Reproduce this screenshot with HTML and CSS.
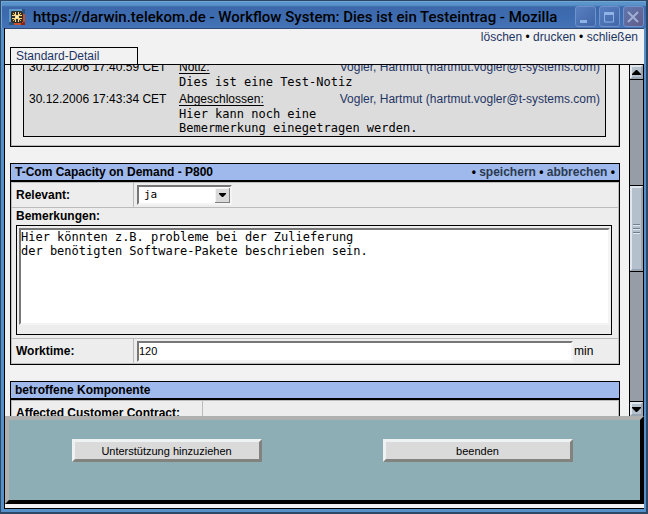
FILE: index.html
```html
<!DOCTYPE html>
<html lang="de">
<head>
<meta charset="utf-8">
<title>Workflow System</title>
<link rel="stylesheet" href="styles.css">
</head>
<body>
<div class="window">
  <header class="titlebar">
    <svg class="app-icon" width="16" height="16" viewBox="0 0 16 16" shape-rendering="crispEdges" aria-hidden="true">
      <rect width="16" height="16" fill="#2c5480"/>
      <path d="M0 0h13v2H2v11H0z" fill="#5b9ac8"/>
      <path d="M16 5v11H5v-3h8V5z" fill="#c8502c"/>
      <path d="M14 13h2v3h-4v-2h2z" fill="#8c2414"/>
      <path d="M3 2h10v1h1v10h-1v1H3v-1H2V3h1z" fill="#34302c"/>
      <path d="M6 3h1v10H6zM9 3h1v10H9zM3 6h10v1H3zM3 9h10v1H3z" fill="#fbd98a"/>
      <path d="M4 4h1v1H4zM11 4h1v1h-1zM4 11h1v1H4zM11 11h1v1h-1zM5 5h1v1H5zM10 5h1v1h-1zM5 10h1v1H5zM10 10h1v1h-1z" fill="#f0b850"/>
      <path d="M7 7h2v2H7z" fill="#fff4b8"/>
    </svg>
    <h1 class="title">https://darwin.telekom.de - Workflow System: Dies ist ein Testeintrag - Mozilla</h1>
    <div class="window-buttons">
      <button type="button" class="wbtn" aria-label="Minimieren"><svg width="18" height="18" viewBox="0 0 18 18"><path d="M4 13.5h7" stroke="#8fb3e6" stroke-width="3"/></svg></button>
      <button type="button" class="wbtn" aria-label="Maximieren"><svg width="18" height="18" viewBox="0 0 18 18"><path d="M4.5 5v9h9V5" fill="none" stroke="#8fb3e6"/><path d="M4 5.5h10" stroke="#8fb3e6" stroke-width="3"/></svg></button>
      <button type="button" class="wbtn close" aria-label="Schließen"><svg width="18" height="18" viewBox="0 0 18 18"><path d="M4 4l10 10M14 4L4 14" stroke="#9fb0d4" stroke-width="2"/></svg></button>
    </div>
  </header>

  <div class="client">
    <div class="head">
      <nav class="links"><a href="#">löschen</a> • <a href="#">drucken</a> • <a href="#">schließen</a></nav>
      <a class="tab" href="#">Standard-Detail</a>
    </div>

    <div class="viewport">
      <main class="content">
        <section class="card log-card">
          <div class="log">
            <div class="entry">
              <time>30.12.2006 17:40:59 CET</time>
              <div class="entry-head"><u>Notiz:</u><a href="#">Vogler, Hartmut (hartmut.vogler@t-systems.com)</a></div>
              <p class="note">Dies ist eine Test-Notiz</p>
            </div>
            <div class="entry">
              <time>30.12.2006 17:43:34 CET</time>
              <div class="entry-head"><u>Abgeschlossen:</u><a href="#">Vogler, Hartmut (hartmut.vogler@t-systems.com)</a></div>
              <p class="note">Hier kann noch eine<br>Bemermerkung einegetragen werden.</p>
            </div>
          </div>
        </section>

        <section class="card">
          <div class="card-head">
            <h2>T-Com Capacity on Demand - P800</h2>
            <span>• <a href="#">speichern</a> • <a href="#">abbrechen</a> •</span>
          </div>
          <div class="card-body">
            <div class="row">
              <label for="relevant">Relevant:</label>
              <div class="field">
                <span class="select">
                  <select id="relevant"><option>ja</option><option>nein</option></select>
                  <svg class="arrow" width="15" height="15" viewBox="0 0 15 15" aria-hidden="true"><path d="M0 0h15v15H0z" fill="#808080"/><path d="M0 0h14v14H0z" fill="#f4f4f4"/><path d="M1 1h13v13H1z" fill="#dadada"/><path d="M4 5h7v1l-3 3H7L4 6z" fill="#000"/></svg>
                </span>
              </div>
            </div>
            <div class="remarks">
              <label for="remarks">Bemerkungen:</label>
              <div class="area">
                <textarea id="remarks" spellcheck="false">Hier könnten z.B. probleme bei der Zulieferung
der benötigten Software-Pakete beschrieben sein.</textarea>
              </div>
            </div>
            <div class="row">
              <label for="worktime">Worktime:</label>
              <div class="field"><input id="worktime" type="text" value="120"><span>min</span></div>
            </div>
          </div>
        </section>

        <section class="card">
          <div class="card-head"><h2>betroffene Komponente</h2></div>
          <div class="card-body">
            <div class="row wide"><span class="name">Affected Customer Contract:</span><div class="field"></div></div>
          </div>
        </section>
      </main>

      <div class="scrollbar" aria-hidden="true">
        <div class="sb-btn"><svg width="9" height="5" viewBox="0 0 9 5"><path d="M4 0h1l4 4v1H0V4z"/></svg></div>
        <div class="sb-before"></div>
        <div class="sb-thumb"><i></i><i></i><i></i></div>
        <div class="sb-after"></div>
        <div class="sb-btn down"><svg width="9" height="5" viewBox="0 0 9 5"><path d="M0 0h9v1L5 5H4L0 1z"/></svg></div>
      </div>
    </div>

    <footer class="actions">
      <button type="button" class="action">Unterstützung hinzuziehen</button>
      <button type="button" class="action">beenden</button>
    </footer>
  </div>
</div>
</body>
</html>
```
FILE: styles.css
```css
* { box-sizing: border-box; }

body {
  margin: 0;
  font: 12px/16px "Liberation Sans", Arial, sans-serif;
  color: #000;
}

h1, h2, p { margin: 0; }
a { color: #1f3564; text-decoration: none; }
svg { display: block; }

.window {
  display: flex;
  flex-direction: column;
  height: 100vh;
  padding: 1px 2px 2px 1px;
  background: #2c4866;
}

/* Title bar */
.titlebar {
  display: flex;
  align-items: center;
  gap: 8px;
  height: 27px;
  padding: 3px 2px 0 7px;
  border-left: 1px solid #6fa6d8;
  border-top: 1px solid #6fa6d8;
  background: linear-gradient(#5b93cb 0 3px, #3c68ab 5px, #3e6cb0 60%, #4573b6);
}
.app-icon { flex: none; }
.title {
  flex: 1;
  min-width: 0;
  white-space: nowrap;
  font: 500 15px/22px Roboto, sans-serif;
}
.window-buttons { display: flex; gap: 3px; }
.wbtn {
  width: 21px;
  height: 21px;
  padding: 0;
  border: 1px solid #6d92cc;
  border-radius: 3px;
  background: linear-gradient(135deg, #5a7fc0, #3f66a8);
}
.wbtn.close { background: linear-gradient(135deg, #5f76ae, #645c8a); }

/* Client area inside the blue frame */
.client {
  flex: 1;
  min-height: 0;
  display: flex;
  flex-direction: column;
  border: solid #5590c8;
  border-width: 0 2px 3px 3px;
  background: #f2f2f2;
  box-shadow: inset 1px 0 #000, inset 0 1px #2f4a78, inset 0 -1px #000;
  padding: 1px 0 5px 1px;
}
.head {
  display: flex;
  flex-direction: column;
  height: 36px;
  border-bottom: 1px solid #000;
}
.links { padding-right: 6px; text-align: right; }
.tab {
  position: relative;
  width: 128px;
  height: 18px;
  margin: 2px 0 0 5px;
  padding-left: 5px;
  border: 1px solid #000;
  border-bottom: 0;
  background: #f2f2f2;
}

.viewport { flex: 1; min-height: 0; display: flex; overflow: hidden; }
.content {
  flex: 1;
  height: 100%;
  margin: 0 9px 0 5px;
}

/* Cards */
.card {
  margin-bottom: 16px;
  border: 1px solid #000;
  background: #ededed;
}
.log-card { margin-top: -16px; padding: 8px 13px 9px 12px; box-shadow: inset -1px -1px #b8b8b8, inset 1px 0 #b8b8b8; }
.log {
  padding: 0 5px 1px;
  border: 1px solid #000;
  background: #dcdcdc;
}
.entry {
  display: grid;
  grid-template-columns: 150px 1fr;
  margin-bottom: 2px;
}
.entry:last-child { margin-bottom: 0; }
.entry-head { display: flex; justify-content: space-between; }
.entry u { text-underline-offset: 2px; }
.note { grid-column: 2; font: 12px/14px "DejaVu Sans Mono", monospace; }

.card-head {
  display: flex;
  justify-content: space-between;
  padding: 0 4px;
  border-bottom: 2px solid #000;
  background: #9fb9ec;
  font-weight: bold;
}
.card-head h2 { font: inherit; }
.card-head a { color: #2a3a50; }

.card-body { border: 1px solid #bcbcbc; }
.row {
  display: grid;
  grid-template-columns: 121px 1fr;
  height: 24px;
}
.row.wide { grid-template-columns: 190px 1fr; }
.row label, .name, .remarks label { padding-left: 4px; font-weight: bold; line-height: 24px; }
.field {
  display: flex;
  align-items: center;
  gap: 1px;
  padding-left: 3px;
  border-left: 1px solid #bcbcbc;
}

.select { position: relative; width: 95px; height: 20px; }
.select select {
  width: 100%;
  height: 100%;
  padding: 0 5px;
  appearance: none;
  border: 2px solid;
  border-color: #777 #f4f4f4 #f4f4f4 #777;
  border-radius: 0;
  background: #fff;
  color: #000;
  font: 11px/16px "DejaVu Sans Mono", monospace;
}
.arrow { position: absolute; top: 3px; right: 2px; pointer-events: none; }

.remarks {
  padding: 0 6px 3px 4px;
  border: solid #bcbcbc;
  border-width: 1px 0;
}
.remarks label { display: block; padding-left: 0; line-height: 17px; }
.area { height: 110px; padding: 2px 1px 0 2px; border: 1px solid #000; }
.area textarea {
  display: block;
  width: 100%;
  height: 97px;
  padding: 0;
  resize: none;
  border: 2px solid;
  border-color: #777 #f4f4f4 #f4f4f4 #777;
  border-radius: 0;
  background: #fff;
  color: #000;
  font: 12px/14px "DejaVu Sans Mono", monospace;
}
.field input {
  flex: 1;
  max-width: 436px;
  height: 21px;
  padding: 0;
  border: 2px solid;
  border-color: #777 #f4f4f4 #f4f4f4 #777;
  background: #fff;
  font: 11px/16px "Liberation Sans", Arial, sans-serif;
}

/* Scroll bar */
.scrollbar {
  display: flex;
  flex-direction: column;
  width: 15px;
  border: solid #000;
  border-width: 0 1px;
  background: #969da6;
}
.sb-btn, .sb-thumb {
  display: flex;
  align-items: center;
  justify-content: center;
  border: 2px solid;
  border-color: #dfe6ee #98a4b2 #98a4b2 #dfe6ee;
  background: #b4c0cc;
}
.sb-btn { height: 14px; box-shadow: 0 1px #000; }
.sb-btn.down { box-shadow: 0 -1px #000; }
.sb-before { flex: 107; }
.sb-after { flex: 131; }
.sb-thumb { flex: 81; flex-direction: column; gap: 2px; box-shadow: 0 -1px #000, 0 1px #000; }
.sb-thumb i { width: 7px; height: 2px; border-top: 1px solid #708090; background: #e2e8f0; }

/* Bottom action panel */
.actions {
  display: grid;
  grid-template-columns: 1fr 1fr;
  justify-items: center;
  height: 88px;
  padding: 19px 7px 0 2px;
  border: 4px solid;
  border-color: #b0b0b0 #000 #000 #b0b0b0;
  background: #8eaeb5;
}
.action {
  width: 190px;
  height: 23px;
  padding: 0;
  border: 3px solid;
  border-color: #eef2f2 #82827e #82827e #eef2f2;
  background: #dadada;
  color: #000;
  font: 11px/16px "Liberation Sans", Arial, sans-serif;
}
```
